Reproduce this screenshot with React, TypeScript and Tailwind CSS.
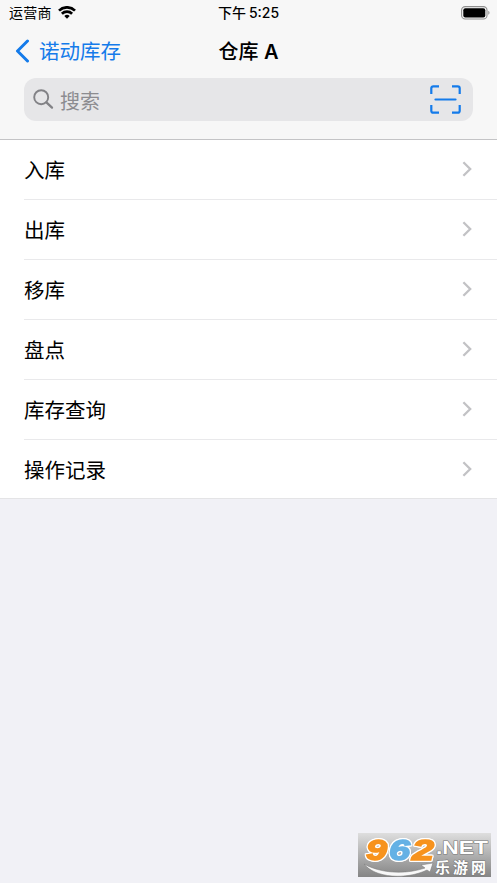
import React from 'react';

const menuItems = ['入库', '出库', '移库', '盘点', '库存查询', '操作记录'];

const StatusBar: React.FC = () => (
    <div className="grid grid-cols-3 items-center h-[26px] pl-[9px] pr-[7px] text-[14px] text-black">
        <div className="flex items-center gap-[6px]">
            <span className="tracking-[0.3px] pb-[2px]">运营商</span>
            <svg className="mb-[2px]" width="18" height="13" viewBox="0 0 18 13" fill="none" stroke="#000" strokeWidth="2.7">
                <path d="M1 4.6a11.4 11.4 0 0 1 16 0" />
                <path d="M3.9 7.8a7.3 7.3 0 0 1 10.2 0" />
                <path d="M9 12.8 6.3 10a3.9 3.9 0 0 1 5.4 0z" fill="#000" stroke="none" />
            </svg>
        </div>
        <span className="pb-[2px] pr-[2px] text-center font-medium whitespace-nowrap">
            下午<span className="ml-[3px]">5:25</span>
        </span>
        <svg className="justify-self-end" width="29" height="14" viewBox="0 0 29 14">
            <rect x="0.6" y="0.6" width="25.4" height="12.4" rx="3.6" fill="none" stroke="#8e8e8e" strokeWidth="1.1" />
            <rect x="2.3" y="2.2" width="22" height="9.2" rx="2" fill="#000" />
            <path d="M27.3 4.8c1.6.6 1.6 3.4 0 4z" fill="#8e8e8e" />
        </svg>
    </div>
);

const NavBar: React.FC = () => (
    <div className="grid grid-cols-[1fr_auto_1fr] items-center h-[50px] px-[15px]">
        <button className="flex items-center gap-[9px] text-[20.5px] leading-none text-[#147bea]">
            <svg width="15" height="24" viewBox="0 0 15 24" fill="none" stroke="currentColor" strokeWidth="3" strokeLinecap="round" strokeLinejoin="round">
                <path d="M12.5 2 2.5 12l10 10" />
            </svg>
            <span className="pt-[2px]">诺动库存</span>
        </button>
        <h1 className="pt-[2px] text-[20px] leading-none font-medium text-black">
            仓库 <span className="font-semibold">A</span>
        </h1>
    </div>
);

const SearchBar: React.FC = () => (
    <div className="flex items-center h-[43px] mx-6 mt-[2px] pl-[9px] pr-[12px] rounded-[12px] bg-[#e6e6e8]">
        <svg width="21" height="21" viewBox="0 0 21 21" fill="none" stroke="#828286" strokeWidth="1.9" strokeLinecap="round">
            <circle cx="8.2" cy="8.2" r="7" />
            <path d="m13.4 13.4 5.6 5.2" strokeWidth="2.3" />
        </svg>
        <span className="flex-1 ml-[6px] pt-1 text-[20px] leading-none text-[#8c8c90]">搜索</span>
        <svg width="31" height="29" viewBox="0 0 31 29" fill="none" stroke="#147bea" strokeWidth="2.2">
            <path d="M1.3 9V3.3a2 2 0 0 1 2-2H9M22 1.3h5.7a2 2 0 0 1 2 2V9M29.7 20v5.7a2 2 0 0 1-2 2H22M9 27.7H3.3a2 2 0 0 1-2-2V20" />
            <path d="M5.5 14.5h20" strokeLinecap="round" />
        </svg>
    </div>
);

const Watermark: React.FC = () => (
    <div className="absolute left-[358px] top-[833px] w-[133px] h-[44px] bg-linear-to-b from-[#dedede] to-[#858585]">
        <svg width="133" height="44" viewBox="0 0 133 44">
            <g
                className="[filter:drop-shadow(1px_0_0_#fff)_drop-shadow(-1px_0_0_#fff)_drop-shadow(0_1px_0_#fff)_drop-shadow(0_-1px_0_#fff)]"
                fontFamily="Liberation Sans, sans-serif"
                fontWeight="bold"
                fontStyle="italic"
                fontSize="30"
                strokeWidth="1.6"
            >
                <text x="8" y="27" textLength="21" lengthAdjust="spacingAndGlyphs" fill="#f7931e" stroke="#f7931e">9</text>
                <text x="31" y="27" textLength="21" lengthAdjust="spacingAndGlyphs" fill="#64b1e5" stroke="#64b1e5">6</text>
                <text x="54" y="27" textLength="22" lengthAdjust="spacingAndGlyphs" fill="#f7931e" stroke="#f7931e">2</text>
            </g>
            <path d="M6 31c16 9 40 11 61 4l-4-3 12-2-3 9-3-2C48 47 17 45 6 31z" fill="#f8f8f8" stroke="#777" strokeWidth="0.5" />
            <g fill="#fff" stroke="#777" strokeWidth="1" paintOrder="stroke" fontFamily="Liberation Sans, Noto Sans CJK SC, sans-serif" fontWeight="bold">
                <text x="78" y="21" fontSize="18" textLength="52" lengthAdjust="spacingAndGlyphs">.NET</text>
                <text x="77" y="39.5" fontSize="15" textLength="51">乐游网</text>
            </g>
        </svg>
    </div>
);

const App: React.FC = () => (
    <div className="relative min-h-screen bg-[#f1f1f6] font-['Inter','Noto_Sans_CJK_SC',sans-serif]">
        {/* Header */}
        <header className="h-[140px] bg-[#f7f7f7] border-b border-[#c4c4c6]">
            <StatusBar />
            <NavBar />
            <SearchBar />
        </header>

        {/* Menu */}
        <ul className="bg-white border-b border-[#e4e4e6]">
            {menuItems.map((item, idx) => (
                <li
                    key={item}
                    className={`flex items-center justify-between ml-6 pr-[25px] ${idx < menuItems.length - 1 ? 'h-[60px] border-b border-[#e9e9eb]' : 'h-[58px]'}`}
                >
                    <span className="pt-1 text-[20.5px] leading-none text-black">{item}</span>
                    <svg className="mb-px" width="10" height="16" viewBox="0 0 10 16" fill="none" stroke="#c2c2c5" strokeWidth="2.3">
                        <path d="m1.4 1.2 6.8 6.8-6.8 6.8" />
                    </svg>
                </li>
            ))}
        </ul>

        <Watermark />
    </div>
);

export default App;
